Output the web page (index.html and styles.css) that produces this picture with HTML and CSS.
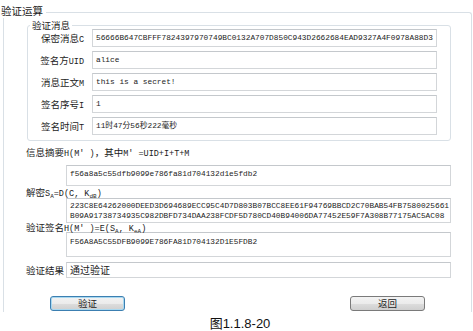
FILE: index.html
```html
<!DOCTYPE html>
<html lang="zh-CN">
<head>
    <meta charset="UTF-8">
    <title>验证运算</title>
    <link rel="stylesheet" href="styles.css">
</head>
<body>
    <div class="page">
        <div class="group outer">
            <div class="group-title">验证运算</div>

            <div class="group inner">
                <div class="group-title">验证消息</div>
                <div class="rows">
                    <div class="row">
                        <label>保密消息<span class="mono">C</span></label>
                        <div class="field mono">56666B647CBFFF7824397970749BC0132A707D850C943D2662684EAD9327A4F0978A88D3</div>
                    </div>
                    <div class="row">
                        <label>签名方<span class="mono">UID</span></label>
                        <div class="field mono">alice</div>
                    </div>
                    <div class="row">
                        <label>消息正文<span class="mono">M</span></label>
                        <div class="field mono">this is a secret!</div>
                    </div>
                    <div class="row">
                        <label>签名序号<span class="mono">I</span></label>
                        <div class="field mono">1</div>
                    </div>
                    <div class="row">
                        <label>签名时间<span class="mono">T</span></label>
                        <div class="field mono">11时47分56秒222毫秒</div>
                    </div>
                </div>
            </div>

            <div class="lower">
                <div class="note first">信息摘要<span class="mono">H(M' )</span>，其中<span class="mono">M' =UID+I+T+M</span></div>
                <div class="field wide digest mono">f56a8a5c55dfb9099e786fa81d704132d1e5fdb2</div>

                <div class="note">解密<span class="mono">S<sub>A</sub>=D(C, K<sub>dB</sub>)</span></div>
                <div class="field wide plain mono">
                    <div>223C8E64262000DEED3D694689ECC95C4D7D803B07BCC8EE61F94769BBCD2C70BAB54FB7580025661</div>
                    <div>B09A91738734935C982DBFD734DAA238FCDF5D780CD40B94006DA77452E59F7A308B77175AC5AC08</div>
                </div>

                <div class="note tight">验证签名<span class="mono">H(M' )=E(S<sub>A</sub>, K<sub>eA</sub>)</span></div>
                <div class="field wide sign mono">F56A8A5C55DFB9099E786FA81D704132D1E5FDB2</div>

                <div class="result">
                    <label>验证结果</label>
                    <div class="field">通过验证</div>
                </div>
            </div>

            <div class="actions">
                <button class="btn focused">验证</button>
                <button class="btn">返回</button>
            </div>
        </div>

        <div class="figure">图1.1.8-20</div>
    </div>
</body>
</html>
```

FILE: styles.css
```css
* {
    box-sizing: border-box;
}

body {
    margin: 0;
    background: #fff;
    color: #1c1c1c;
    font-family: "Noto Sans CJK SC", sans-serif;
    font-size: 9.5px;
}

.page {
    width: 473px;
    overflow: hidden;
}

.mono {
    font-family: "Liberation Mono", "Noto Sans CJK SC", monospace;
    font-size: 7.8px;
}

label .mono,
.note .mono {
    font-size: 8.5px;
    line-height: 0;
}

sub {
    font-size: 6px;
    vertical-align: -2px;
    line-height: 0;
}

/* group boxes */
.group {
    border: 1px solid #d9e0e6;
    border-radius: 3px;
}

.group-title {
    width: fit-content;
    height: 14px;
    line-height: 14px;
    background: #fff;
    white-space: nowrap;
}

.outer {
    margin: 12px 0 0 3px;
    width: 469px;
    height: 300px;
    border-bottom: none;
    border-bottom-left-radius: 0;
    border-bottom-right-radius: 0;
}

.outer > .group-title {
    font-size: 10.5px;
    margin: -9px 0 0 -3px;
    padding: 0 3px 0 0;
}

.inner {
    margin: 7px 0 0 23px;
    width: 424px;
    padding: 0 0 5px 0;
}

.inner > .group-title {
    margin: -8px 0 0 2px;
    padding: 0 2px;
}

.rows {
    margin-top: -3px;
    display: flex;
    flex-direction: column;
    gap: 4px;
}

.row {
    display: flex;
    align-items: center;
    gap: 8px;
    height: 18px;
}

.row label {
    width: 56px;
    text-align: right;
    white-space: nowrap;
    line-height: 14px;
}

.field {
    background: #fff;
    border: 1px solid #d3d6d9;
    border-top-color: #c4c8cc;
    padding: 0 3px;
    white-space: nowrap;
    overflow: hidden;
}

.row .field {
    width: 345px;
    height: 18px;
    line-height: 16px;
}

/* lower part */
.lower {
    margin-left: 22px;
    width: 425px;
}

.note {
    height: 12px;
    line-height: 12px;
    white-space: nowrap;
}

.note.first {
    margin-top: 5px;
}

.note.tight {
    height: 9px;
    line-height: 9px;
}

.wide {
    margin-left: 40px;
    width: 385px;
    line-height: 10px;
}

.digest {
    margin-top: 7px;
    height: 21px;
    padding-top: 3px;
}

.plain {
    height: 25px;
    padding-top: 2px;
}

.sign {
    height: 25px;
    padding-top: 4px;
}

.result {
    margin-top: 5px;
    display: flex;
    align-items: center;
    height: 16px;
}

.result label {
    width: 40px;
    white-space: nowrap;
}

.result .field {
    width: 385px;
    height: 16px;
    line-height: 14px;
    font-size: 10px;
}

/* buttons */
.actions {
    margin-top: 18px;
    display: flex;
    gap: 225px;
    padding-left: 46px;
}

.btn {
    width: 75px;
    height: 15px;
    padding: 0;
    font-family: "Noto Sans CJK SC", sans-serif;
    font-size: 9.5px;
    line-height: 13px;
    color: #1c1c1c;
    background: linear-gradient(#f3f3f3, #ebebeb 50%, #dddddd 51%, #cfcfcf);
    border: 1px solid #7a7a7a;
    border-radius: 3px;
}

.btn.focused {
    border-color: #3c7fb1;
    box-shadow: inset 0 0 0 1px #a8d8f0;
}

.figure {
    margin-top: 5px;
    padding-left: 7px;
    text-align: center;
    height: 14px;
    line-height: 14px;
    font-family: "Liberation Sans", "Noto Sans CJK SC", sans-serif;
    font-size: 13px;
    color: #111;
}
```
